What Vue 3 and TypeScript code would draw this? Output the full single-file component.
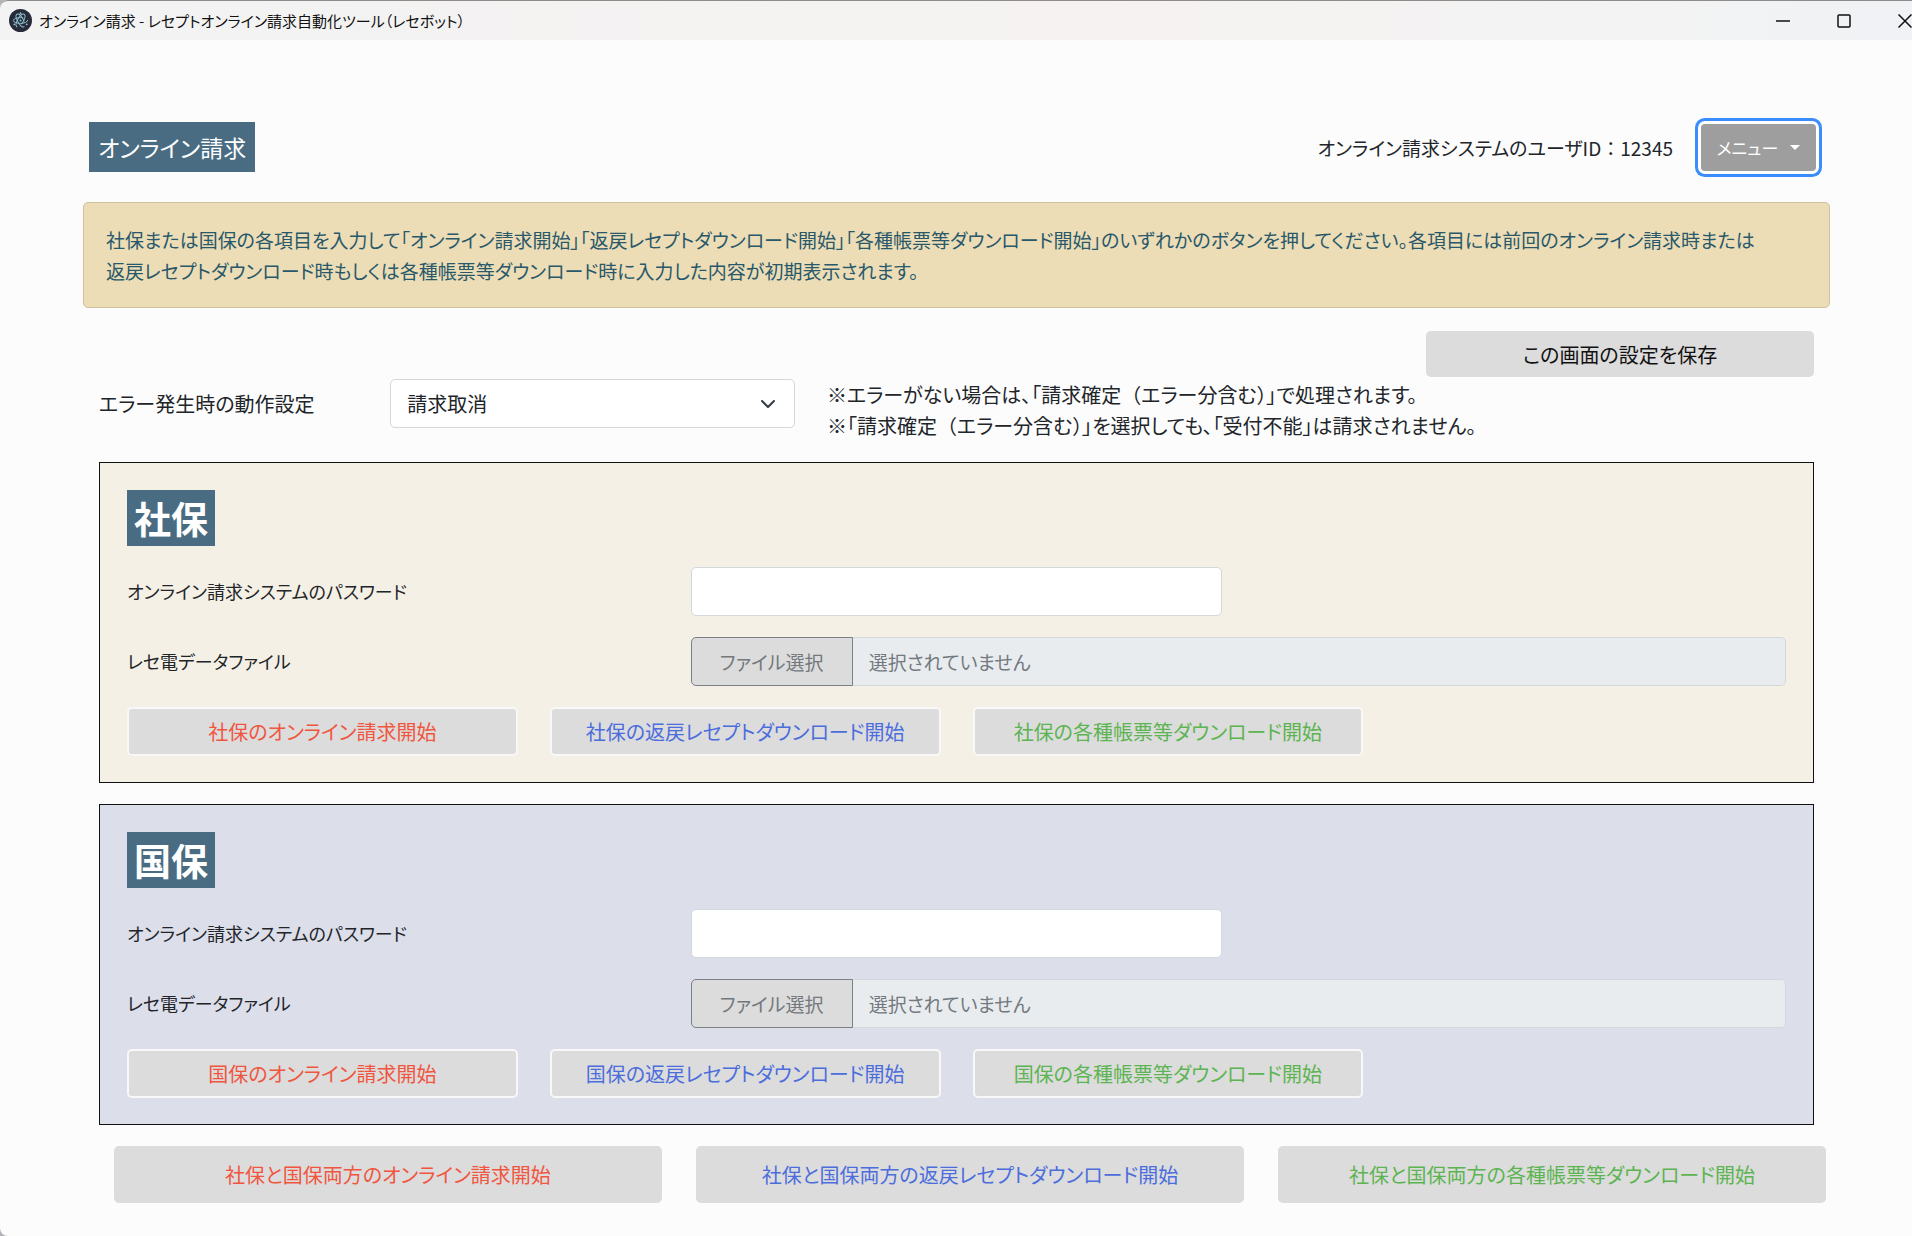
<script setup lang="ts">
import { ref } from 'vue'

interface Section {
  id: string
  name: string
}

interface Action {
  suffix: string
  tone: string
}

const sections: Section[] = [
  { id: 'shaho', name: '社保' },
  { id: 'kokuho', name: '国保' },
]

const actions: Action[] = [
  { suffix: 'のオンライン請求開始', tone: 'red' },
  { suffix: 'の返戻レセプトダウンロード開始', tone: 'blue' },
  { suffix: 'の各種帳票等ダウンロード開始', tone: 'green' },
]

const errorAction = ref('cancel')
const passwords = ref<Record<string, string>>({ shaho: '', kokuho: '' })
const emptyFile = '選択されていません'
</script>

<template>
  <div class="window">
    <header class="titlebar">
      <svg class="app-icon" viewBox="0 0 24 24" aria-hidden="true">
        <circle cx="12" cy="12" r="12" fill="#272a38" />
        <g fill="none" stroke="#8fc3d0" stroke-width="1" stroke-linecap="round">
          <ellipse cx="12" cy="12" rx="7.500" ry="3" stroke-dasharray="28 7" transform="rotate(0 12 12)" />
          <ellipse cx="12" cy="12" rx="7.500" ry="3" stroke-dasharray="28 7" transform="rotate(60 12 12)" />
          <ellipse cx="12" cy="12" rx="7.500" ry="3" stroke-dasharray="28 7" transform="rotate(120 12 12)" />
        </g>
        <g fill="#8fc3d0">
          <circle cx="12" cy="12" r="1" />
          <circle cx="12" cy="4.500" r="1" />
          <circle cx="5.500" cy="16" r="1" />
          <circle cx="18.500" cy="16" r="1" />
        </g>
      </svg>
      <span class="window-title">オンライン請求 - レセプトオンライン請求自動化ツール（レセボット）</span>
      <div class="window-controls">
        <button type="button" aria-label="最小化">
          <svg viewBox="0 0 14 14"><path d="M0 7H14" /></svg>
        </button>
        <button type="button" aria-label="最大化">
          <svg viewBox="0 0 14 14"><rect x="1" y="1" width="12" height="12" rx="1" /></svg>
        </button>
        <button type="button" aria-label="閉じる">
          <svg viewBox="0 0 14 14"><path d="M0.500 0.500L13.500 13.500M13.500 0.500L0.500 13.500" /></svg>
        </button>
      </div>
    </header>

    <main class="content">
      <div class="page-head">
        <h1 class="page-title">オンライン請求</h1>
        <div class="user">
          <span>オンライン請求システムのユーザID<span class="full">：</span>12345</span>
          <button type="button" class="menu-button">メニュー<i class="caret"></i></button>
        </div>
      </div>

      <p class="notice">
        社保または国保の各項目を入力して「オンライン請求開始」「返戻レセプトダウンロード開始」「各種帳票等ダウンロード開始」のいずれかのボタンを押してください。各項目には前回のオンライン請求時または<br />返戻レセプトダウンロード時もしくは各種帳票等ダウンロード時に入力した内容が初期表示されます。
      </p>

      <div class="body">
        <div class="save-row">
          <button type="button" class="btn save">この画面の設定を保存</button>
        </div>

        <div class="grid setting-row">
          <label class="span-2" for="error-action">エラー発生時の動作設定</label>
          <div class="select-wrap span-3">
            <select id="error-action" v-model="errorAction" class="control">
              <option value="cancel">請求取消</option>
              <option value="confirm">請求確定（エラー分含む）</option>
            </select>
            <svg class="chevron" viewBox="0 0 16 16" aria-hidden="true"><path d="M2 5l6 6 6-6" /></svg>
          </div>
          <div class="span-7 remarks">
            <div>※エラーがない場合は、「請求確定<span class="full">（</span>エラー分含む<span class="full">）</span>」で処理されます。</div>
            <div>※「請求確定<span class="full">（</span>エラー分含む<span class="full">）</span>」を選択しても、「受付不能」は請求されません。</div>
          </div>
        </div>

        <section v-for="s in sections" :key="s.id" class="panel" :class="s.id">
          <h2 class="panel-title">{{ s.name }}</h2>
          <div class="grid">
            <label class="span-4 field-label" :for="s.id + '-password'">オンライン請求システムのパスワード</label>
            <input :id="s.id + '-password'" v-model="passwords[s.id]" type="password" class="control span-4" />
          </div>
          <div class="grid">
            <label class="span-4 field-label" :for="s.id + '-file'">レセ電データファイル</label>
            <div class="file span-8">
              <button type="button" class="file-button">ファイル選択</button>
              <input :id="s.id + '-file'" type="text" class="control file-name" readonly :value="emptyFile" />
            </div>
          </div>
          <div class="grid">
            <button v-for="a in actions" :key="a.tone" type="button" class="btn outlined span-3" :class="a.tone">
              {{ s.name + a.suffix }}
            </button>
          </div>
        </section>

        <div class="both">
          <button v-for="a in actions" :key="a.tone" type="button" class="btn large" :class="a.tone">
            {{ '社保と国保両方' + a.suffix }}
          </button>
        </div>
      </div>
    </main>
  </div>
</template>

<style>
body {
  background: #b4b4b8;
}
</style>

<style scoped>
.window {
  min-height: 100vh;
  box-sizing: border-box;
  border-radius: 8px 0 0 8px;
  background: #fcfcfc;
  color: #212529;
  font-family: "Noto Sans CJK JP", sans-serif;
  font-size: 20px;
  line-height: 31px;
  font-feature-settings: "palt";
}

.window *,
.window *::before {
  box-sizing: border-box;
}

.full {
  font-feature-settings: normal;
}

button,
input,
select {
  font: inherit;
  font-feature-settings: inherit;
  color: inherit;
  margin: 0;
}

.titlebar {
  display: flex;
  align-items: center;
  height: 40px;
  padding-left: 9px;
  border-top: 1px solid #8d8a8a;
  border-top-left-radius: 8px;
  background: linear-gradient(90deg, #f3f3f3, #f5f2f1 60%, #f3f3f3 85%, #f0f2f5);
  overflow: hidden;
}

.app-icon {
  width: 23px;
  height: 23px;
}

.window-title {
  margin-left: 7px;
  font-size: 15px;
  color: #111;
}

.window-controls {
  display: flex;
  gap: 47px;
  margin-left: auto;
}

.window-controls button {
  display: flex;
  padding: 0;
  border: 0;
  background: none;
}

.window-controls svg {
  width: 14px;
  height: 14px;
  fill: none;
  stroke: #111;
  stroke-width: 1.5;
}

.content {
  padding: 82px 82px 32px 83px;
}

.page-head {
  display: flex;
  align-items: center;
  justify-content: space-between;
  height: 50px;
  padding: 0 14px 0 6px;
}

.page-title {
  margin: 0;
  padding: 0 9px;
  background: #4a6c82;
  color: #fff;
  font-size: 23px;
  font-weight: 400;
  line-height: 50px;
}

.user {
  display: flex;
  align-items: center;
  gap: 28px;
  font-size: 19px;
}

.menu-button {
  display: flex;
  align-items: center;
  justify-content: center;
  gap: 12px;
  width: 115px;
  height: 47px;
  padding: 0;
  border: 0;
  border-radius: 4px;
  background: #9e9e9e;
  color: #fff;
  font-size: 17px;
  box-shadow: 0 0 0 3px #fff, 0 0 0 6px #3a8dfa;
}

.caret {
  border: 5px solid transparent;
  border-top-color: #fff;
  border-bottom: 0;
}

.notice {
  margin: 30px 0 0;
  padding: 21px 22px;
  border: 1px solid #cfc19b;
  border-radius: 5px;
  background: #ecddb6;
  color: #28586a;
  font-size: 19px;
}

.body {
  padding: 0 16px;
}

.save-row {
  display: flex;
  justify-content: flex-end;
  margin: 23px 0 2px;
}

.grid {
  display: grid;
  grid-template-columns: repeat(12, minmax(0, 1fr));
  column-gap: 32px;
  align-items: center;
}

.span-2 { grid-column: span 2; }
.span-3 { grid-column: span 3; }
.span-4 { grid-column: span 4; }
.span-7 { grid-column: span 7; }
.span-8 { grid-column: span 8; }

.setting-row {
  align-items: start;
}

.setting-row label {
  line-height: 49px;
  white-space: nowrap;
}

.remarks {
  white-space: nowrap;
}

.field-label {
  font-size: 18px;
}

.control {
  display: block;
  width: 100%;
  height: 49px;
  padding: 0 16px;
  border: 1px solid #d3d8dd;
  border-radius: 5px;
  background: #fff;
  outline: 0;
}

.control.span-4 {
  width: auto;
}

.select-wrap {
  position: relative;
}

.select-wrap select {
  appearance: none;
}

.chevron {
  position: absolute;
  right: 18px;
  top: 17px;
  width: 18px;
  height: 16px;
  fill: none;
  stroke: #343a40;
  stroke-width: 2;
  stroke-linecap: round;
  stroke-linejoin: round;
  pointer-events: none;
}

.panel {
  display: flex;
  flex-direction: column;
  gap: 21px;
  margin-top: 21px;
  padding: 27px 27px 26px;
  border: 1px solid #111;
}

.panel.shaho {
  background: #f5f0e5;
}

.panel.kokuho {
  background: #dcdee9;
}

.panel-title {
  align-self: flex-start;
  margin: 0;
  padding: 0 7px;
  background: #4a6c82;
  color: #fff;
  font-size: 37px;
  font-weight: 700;
  line-height: 56px;
}

.file {
  display: flex;
  font-size: 19px;
}

.file-button {
  flex: none;
  width: 162px;
  padding: 0;
  border: 1px solid #7b8085;
  border-radius: 5px 0 0 5px;
  background: #dcdcdc;
  color: #73787d;
}

.file-name {
  flex: 1;
  border-left: 0;
  border-radius: 0 5px 5px 0;
  background: #e8ecef;
  color: #73797f;
}

.btn {
  height: 49px;
  padding: 0;
  border: 0;
  border-radius: 5px;
  background: #dcdcdc;
  white-space: nowrap;
}

.btn.save {
  width: 388px;
  height: 46px;
  color: #111;
}

.btn.outlined {
  border: 2px solid #f8f8f8;
}

.btn.large {
  height: 57px;
}

.red { color: #f0563f; }
.blue { color: #4c6ddc; }
.green { color: #5cb452; }

.both {
  display: grid;
  grid-template-columns: repeat(3, minmax(0, 1fr));
  column-gap: 34px;
  margin: 21px -12px 0 15px;
}
</style>
